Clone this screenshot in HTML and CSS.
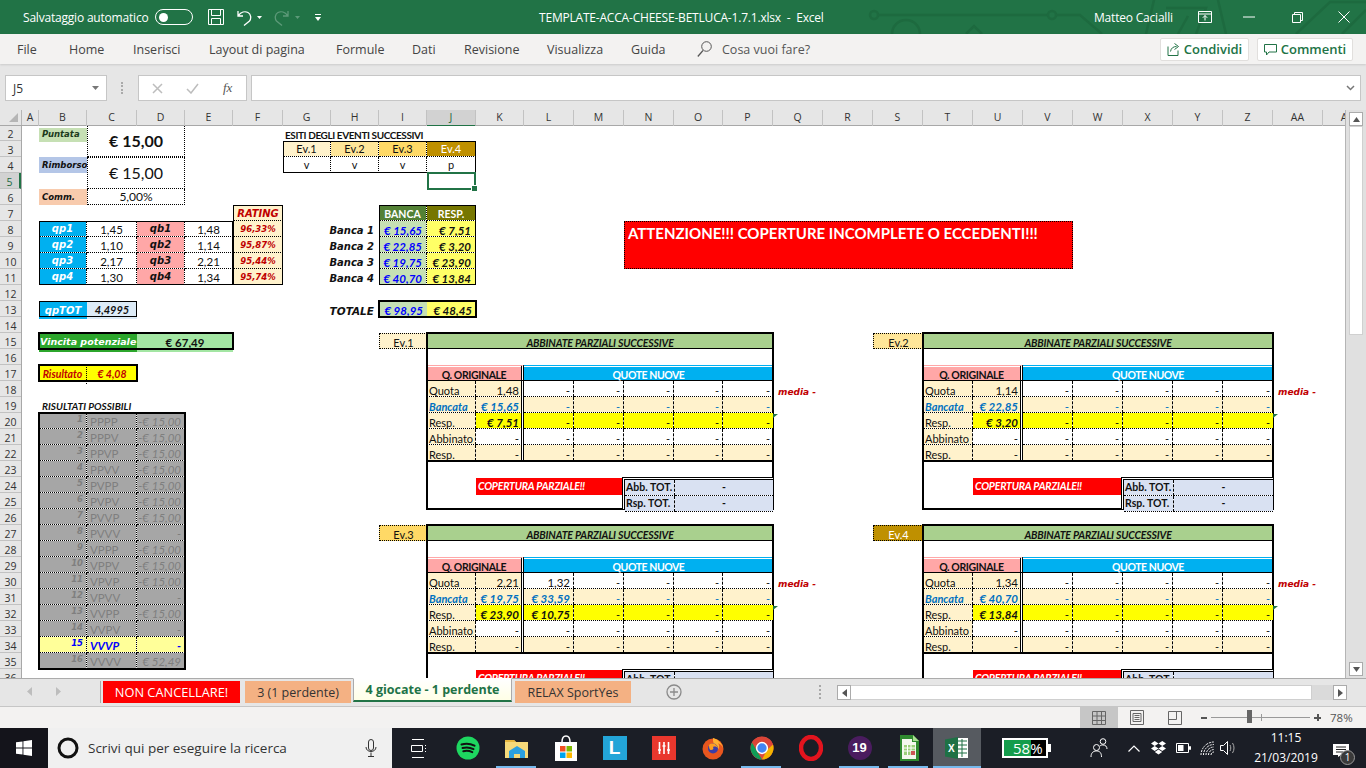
FILE: index.html
```html
<!DOCTYPE html>
<html lang="it">
<head>
<meta charset="utf-8">
<title>TEMPLATE-ACCA-CHEESE-BETLUCA-1.7.1.xlsx - Excel</title>
<link rel="stylesheet" href="styles.css">
</head>
<body>
<div class="app">
  <header class="titlebar">
    <svg class="circuit" width="500" height="34" viewBox="0 0 500 34"><g fill="none" stroke="#1d6a3f" stroke-width="2.5"><circle cx="8" cy="15" r="4"/><path d="M12 15H182"/><circle cx="186" cy="15" r="4"/><path d="M190 15H214L236 34"/><path d="M288 0L280 34M352 0L360 34"/><path d="M300 8H340L330 34M312 34L322 16"/><path d="M26 34A14 14 0 0 1 54 34"/><path d="M100 34L108 26L116 34"/><path d="M430 34L464 2H500"/><path d="M476 34L500 10"/></g></svg>
    <span class="autosave">Salvataggio automatico</span>
    <span class="toggle"><i></i></span>
    <svg class="ti save" width="16" height="16" viewBox="0 0 16 16"><path d="M.5.500h15v15H.5zM3.500.5v6h9v-6M3.500 15.500v-6h9v6" fill="none" stroke="#fff"/></svg>
    <svg class="ti undo" width="15" height="17" viewBox="0 0 15 17"><path d="M1 2v5h5M1.500 6.500C4 3 8 2 11 3.500s3.500 6 1.500 8.500L7 16.500" fill="none" stroke="#fff" stroke-width="1.300"/></svg>
    <svg class="ti drop" width="5" height="3" viewBox="0 0 5 3"><path d="M0 0h5L2.500 3z" fill="#fff"/></svg>
    <svg class="ti redo" width="15" height="17" viewBox="0 0 15 17"><path d="M14 2v5H9M13.500 6.500C11 3 7 2 4 3.500s-3.500 6-1.500 8.500L8 16.500" fill="none" stroke="#5d9a79" stroke-width="1.300"/></svg>
    <svg class="ti drop2" width="5" height="3" viewBox="0 0 5 3"><path d="M0 0h5L2.500 3z" fill="#5d9a79"/></svg>
    <svg class="ti cust" width="6" height="7" viewBox="0 0 6 7"><path d="M0 0h6v1H0zM0 3h6L3 7z" fill="#fff"/></svg>
    <span class="doc">TEMPLATE-ACCA-CHEESE-BETLUCA-1.7.1.xlsx&nbsp; -&nbsp; Excel</span>
    <span class="user">Matteo Cacialli</span>
    <svg class="ti opt" width="14" height="12" viewBox="0 0 14 12"><path d="M.5.500h13v11H.5zM.5 3h13M7 9.500V4.500M4.800 6.800L7 4.500l2.200 2.300" fill="none" stroke="#fff"/></svg>
    <svg class="ti min" width="12" height="2" viewBox="0 0 12 2"><path d="M0 1h12" stroke="#fff"/></svg>
    <svg class="ti res" width="11" height="11" viewBox="0 0 11 11"><path d="M.5 2.500h8v8h-8zM2.500 2.500v-2h8v8h-2" fill="none" stroke="#fff"/></svg>
    <svg class="ti cls" width="12" height="12" viewBox="0 0 12 12"><path d="M.5.500l11 11M11.500.500l-11 11" stroke="#fff"/></svg>
  </header>

  <nav class="menubar">
    <span class="m1">File</span><span class="m2">Home</span><span class="m3">Inserisci</span><span class="m4">Layout di pagina</span><span class="m5">Formule</span><span class="m6">Dati</span><span class="m7">Revisione</span><span class="m8">Visualizza</span><span class="m9">Guida</span>
    <svg class="msearch" width="15" height="16" viewBox="0 0 15 16"><circle cx="9.500" cy="5.500" r="4.800" fill="none" stroke="#555"/><path d="M6 9.500L.8 15.500" stroke="#555" stroke-width="1.200"/></svg>
    <span class="mhelp">Cosa vuoi fare?</span>
    <span class="mbtn share"><svg width="13" height="14" viewBox="0 0 13 14"><path d="M1 4.500v9h10v-5M3.500 9.500C4 6 6.500 4.500 9.500 4.500M7.500 1.500l4 3-4 3" fill="none" stroke="#217346"/></svg>Condividi</span>
    <span class="mbtn comm"><svg width="13" height="13" viewBox="0 0 13 13"><path d="M.5 1.500h12v7.500H5L2.500 12V9H.5z" fill="none" stroke="#217346"/></svg>Commenti</span>
  </nav>

  <section class="fbar">
    <div class="namebox"><span>J5</span><svg width="7" height="4" viewBox="0 0 7 4"><path d="M0 0h7L3.500 4z" fill="#777"/></svg></div>
    <span class="grip"></span>
    <div class="fxbox">
      <svg width="11" height="11" viewBox="0 0 11 11"><path d="M1 1l9 9M10 1l-9 9" stroke="#bdbdbd" stroke-width="1.500"/></svg>
      <svg width="13" height="11" viewBox="0 0 13 11"><path d="M1 6l4 4 7-9" fill="none" stroke="#bdbdbd" stroke-width="1.500"/></svg>
      <em>fx</em>
    </div>
    <div class="finput"><svg width="9" height="6" viewBox="0 0 9 6"><path d="M1 1l3.500 3.500L8 1" fill="none" stroke="#777" stroke-width="1.500"/></svg></div>
  </section>

  <main class="book">
    <div class="pane">
      <div class="colhdr">
        <span class="corner"><svg width="9" height="9" viewBox="0 0 9 9"><path d="M9 0v9H0z" fill="#b5b5b5"/></svg></span>
        <div class="cols">
          <span>A</span><span>B</span><span>C</span><span>D</span><span>E</span><span>F</span><span>G</span><span>H</span><span>I</span><span class="sel">J</span><span>K</span><span>L</span><span>M</span><span>N</span><span>O</span><span>P</span><span>Q</span><span>R</span><span>S</span><span>T</span><span>U</span><span>V</span><span>W</span><span>X</span><span>Y</span><span>Z</span><span>AA</span><span>AB</span>
        </div>
      </div>
      <div class="sheetwrap">
        <div class="rows">
          <span class="first">2</span><span>3</span><span>4</span><span class="sel">5</span><span>6</span><span>7</span><span>8</span><span>9</span><span>10</span><span>11</span><span>12</span><span>13</span><span>14</span><span>15</span><span>16</span><span>17</span><span>18</span><span>19</span><span>20</span><span>21</span><span>22</span><span>23</span><span>24</span><span>25</span><span>26</span><span>27</span><span>28</span><span>29</span><span>30</span><span>31</span><span>32</span><span>33</span><span>34</span><span>35</span><span>36</span>
        </div>
        <div class="sheet">

          <div class="stake">
            <div class="lab lab-g">Puntata</div>
            <div class="val val-big bold">€ 15,00</div>
            <div class="lab lab-b">Rimborso</div>
            <div class="val val-big">€ 15,00</div>
            <div class="lab lab-o">Comm.</div>
            <div class="val val-small">5,00%</div>
          </div>

          <div class="quotes">
            <div class="qp">qp1</div><div class="qn">1,45</div><div class="qb">qb1</div><div class="qn">1,48</div>
            <div class="qp">qp2</div><div class="qn">1,10</div><div class="qb">qb2</div><div class="qn">1,14</div>
            <div class="qp">qp3</div><div class="qn">2,17</div><div class="qb">qb3</div><div class="qn">2,21</div>
            <div class="qp">qp4</div><div class="qn">1,30</div><div class="qb">qb4</div><div class="qn">1,34</div>
          </div>

          <div class="rating">
            <div class="rhead">RATING</div>
            <div>96,33%</div><div>95,87%</div><div>95,44%</div><div>95,74%</div>
          </div>

          <div class="esiti-title">ESITI DEGLI EVENTI SUCCESSIVI</div>
          <div class="esiti">
            <div class="e1">Ev.1</div><div class="e2">Ev.2</div><div class="e3">Ev.3</div><div class="e4">Ev.4</div>
            <div>v</div><div>v</div><div>v</div><div>p</div>
          </div>
          <div class="cursor"></div>

          <div class="banklabels">
            <div>Banca 1</div><div>Banca 2</div><div>Banca 3</div><div>Banca 4</div>
          </div>
          <div class="bank">
            <div class="bh1">BANCA</div><div class="bh2">RESP.</div>
            <div class="bb">€ 15,65</div><div class="br">€ 7,51</div>
            <div class="bb">€ 22,85</div><div class="br">€ 3,20</div>
            <div class="bb">€ 19,75</div><div class="br">€ 23,90</div>
            <div class="bb">€ 40,70</div><div class="br">€ 13,84</div>
          </div>

          <div class="banner">ATTENZIONE!!! COPERTURE INCOMPLETE O ECCEDENTI!!!</div>

          <div class="qptot"><div class="qp">qpTOT</div><div class="qpv">4,4995</div></div>
          <div class="tot-label">TOTALE</div>
          <div class="tot"><div class="bb">€ 98,95</div><div class="br">€ 48,45</div></div>

          <div class="vincita"><div class="vl">Vincita potenziale</div><div class="vv">€ 67,49</div></div>
          <div class="risultato"><div>Risultato</div><div>€ 4,08</div></div>

          <div class="poss-title">RISULTATI POSSIBILI</div>
          <div class="poss">
            <div class="pn">1</div><div class="pc">PPPP</div><div class="pv">-€ 15,00</div>
            <div class="pn">2</div><div class="pc">PPPV</div><div class="pv">-€ 15,00</div>
            <div class="pn">3</div><div class="pc">PPVP</div><div class="pv">-€ 15,00</div>
            <div class="pn">4</div><div class="pc">PPVV</div><div class="pv">-€ 15,00</div>
            <div class="pn">5</div><div class="pc">PVPP</div><div class="pv">-€ 15,00</div>
            <div class="pn">6</div><div class="pc">PVPV</div><div class="pv">-€ 15,00</div>
            <div class="pn">7</div><div class="pc">PVVP</div><div class="pv">-€ 15,00</div>
            <div class="pn">8</div><div class="pc">PVVV</div><div class="pv">-</div>
            <div class="pn">9</div><div class="pc">VPPP</div><div class="pv">-€ 15,00</div>
            <div class="pn">10</div><div class="pc">VPPV</div><div class="pv">-€ 15,00</div>
            <div class="pn">11</div><div class="pc">VPVP</div><div class="pv">-€ 15,00</div>
            <div class="pn">12</div><div class="pc">VPVV</div><div class="pv">-</div>
            <div class="pn">13</div><div class="pc">VVPP</div><div class="pv">-€ 15,00</div>
            <div class="pn">14</div><div class="pc">VVPV</div><div class="pv">-</div>
            <div class="pn hit">15</div><div class="pc hit">VVVP</div><div class="pv hit">-</div>
            <div class="pn">16</div><div class="pc">VVVV</div><div class="pv">€ 52,49</div>
          </div>

          <div class="evlabel l1 e1">Ev.1</div>
          <div class="ev ev-a p1">
            <div class="t">ABBINATE PARZIALI SUCCESSIVE</div><div class="gap"></div>
            <div class="qo">Q. ORIGINALE</div><div class="qnew">QUOTE NUOVE</div>
            <div class="c tx">Quota</div><div class="c k">1,48</div><div class="c f">-</div><div class="c">-</div><div class="c">-</div><div class="c">-</div><div class="c e">-</div>
            <div class="c tx blue bi">Bancata</div><div class="c k blue bi">€ 15,65</div><div class="c f cr blue">-</div><div class="c cr blue">-</div><div class="c cr blue">-</div><div class="c cr blue">-</div><div class="c e cr blue">-</div>
            <div class="c tx">Resp.</div><div class="c k y bi">€ 7,51</div><div class="c f y">-</div><div class="c y">-</div><div class="c y">-</div><div class="c y">-</div><div class="c e y tri">-</div>
            <div class="c tx">Abbinato</div><div class="c k w">-</div><div class="c f">-</div><div class="c">-</div><div class="c">-</div><div class="c">-</div><div class="c e">-</div>
            <div class="c tx">Resp.</div><div class="c k">-</div><div class="c f cr">-</div><div class="c cr">-</div><div class="c cr">-</div><div class="c cr">-</div><div class="c e cr">-</div>
            <div class="blank"></div><div class="red">COPERTURA PARZIALE!!</div>
            <div class="abb"><div>Abb. TOT.</div><div>-</div><div>Rsp. TOT.</div><div>-</div></div>
          </div>
          <div class="media m-r1 q">media -</div>

          <div class="evlabel l2 e2">Ev.2</div>
          <div class="ev ev-b p2">
            <div class="t">ABBINATE PARZIALI SUCCESSIVE</div><div class="gap"></div>
            <div class="qo">Q. ORIGINALE</div><div class="qnew">QUOTE NUOVE</div>
            <div class="c tx">Quota</div><div class="c k">1,14</div><div class="c f">-</div><div class="c">-</div><div class="c">-</div><div class="c">-</div><div class="c e">-</div>
            <div class="c tx blue bi">Bancata</div><div class="c k blue bi">€ 22,85</div><div class="c f cr blue">-</div><div class="c cr blue">-</div><div class="c cr blue">-</div><div class="c cr blue">-</div><div class="c e cr blue">-</div>
            <div class="c tx">Resp.</div><div class="c k y bi">€ 3,20</div><div class="c f y">-</div><div class="c y">-</div><div class="c y">-</div><div class="c y">-</div><div class="c e y tri">-</div>
            <div class="c tx">Abbinato</div><div class="c k w">-</div><div class="c f">-</div><div class="c">-</div><div class="c">-</div><div class="c">-</div><div class="c e">-</div>
            <div class="c tx">Resp.</div><div class="c k">-</div><div class="c f cr">-</div><div class="c cr">-</div><div class="c cr">-</div><div class="c cr">-</div><div class="c e cr">-</div>
            <div class="blank"></div><div class="red">COPERTURA PARZIALE!!</div>
            <div class="abb"><div>Abb. TOT.</div><div>-</div><div>Rsp. TOT.</div><div>-</div></div>
          </div>
          <div class="media m-r1 aa">media -</div>

          <div class="evlabel l3 e3">Ev.3</div>
          <div class="ev ev-a p3">
            <div class="t">ABBINATE PARZIALI SUCCESSIVE</div><div class="gap"></div>
            <div class="qo">Q. ORIGINALE</div><div class="qnew">QUOTE NUOVE</div>
            <div class="c tx">Quota</div><div class="c k">2,21</div><div class="c f">1,32</div><div class="c">-</div><div class="c">-</div><div class="c">-</div><div class="c e">-</div>
            <div class="c tx blue bi">Bancata</div><div class="c k blue bi">€ 19,75</div><div class="c f cr blue bi">€ 33,59</div><div class="c cr blue">-</div><div class="c cr blue">-</div><div class="c cr blue">-</div><div class="c e cr blue">-</div>
            <div class="c tx">Resp.</div><div class="c k y bi">€ 23,90</div><div class="c f y bi">€ 10,75</div><div class="c y">-</div><div class="c y">-</div><div class="c y">-</div><div class="c e y tri">-</div>
            <div class="c tx">Abbinato</div><div class="c k w">-</div><div class="c f">-</div><div class="c">-</div><div class="c">-</div><div class="c">-</div><div class="c e">-</div>
            <div class="c tx">Resp.</div><div class="c k">-</div><div class="c f cr">-</div><div class="c cr">-</div><div class="c cr">-</div><div class="c cr">-</div><div class="c e cr">-</div>
            <div class="blank"></div><div class="red">COPERTURA PARZIALE!!</div>
            <div class="abb"><div>Abb. TOT.</div><div>-</div><div>Rsp. TOT.</div><div>-</div></div>
          </div>
          <div class="media m-r2 q">media -</div>

          <div class="evlabel l4 e4">Ev.4</div>
          <div class="ev ev-b p4">
            <div class="t">ABBINATE PARZIALI SUCCESSIVE</div><div class="gap"></div>
            <div class="qo">Q. ORIGINALE</div><div class="qnew">QUOTE NUOVE</div>
            <div class="c tx">Quota</div><div class="c k">1,34</div><div class="c f">-</div><div class="c">-</div><div class="c">-</div><div class="c">-</div><div class="c e">-</div>
            <div class="c tx blue bi">Bancata</div><div class="c k blue bi">€ 40,70</div><div class="c f cr blue">-</div><div class="c cr blue">-</div><div class="c cr blue">-</div><div class="c cr blue">-</div><div class="c e cr blue">-</div>
            <div class="c tx">Resp.</div><div class="c k y bi">€ 13,84</div><div class="c f y">-</div><div class="c y">-</div><div class="c y">-</div><div class="c y">-</div><div class="c e y tri">-</div>
            <div class="c tx">Abbinato</div><div class="c k w">-</div><div class="c f">-</div><div class="c">-</div><div class="c">-</div><div class="c">-</div><div class="c e">-</div>
            <div class="c tx">Resp.</div><div class="c k">-</div><div class="c f cr">-</div><div class="c cr">-</div><div class="c cr">-</div><div class="c cr">-</div><div class="c e cr">-</div>
            <div class="blank"></div><div class="red">COPERTURA PARZIALE!!</div>
            <div class="abb"><div>Abb. TOT.</div><div>-</div><div>Rsp. TOT.</div><div>-</div></div>
          </div>
          <div class="media m-r2 aa">media -</div>

        </div>
      </div>
    </div>
    <aside class="vscroll">
      <span class="sbtn"><svg width="7" height="5" viewBox="0 0 7 5"><path d="M3.500 0L7 5H0z" fill="#555"/></svg></span>
      <span class="vthumb"></span>
      <span class="sbtn"><svg width="7" height="5" viewBox="0 0 7 5"><path d="M3.500 5L7 0H0z" fill="#555"/></svg></span>
    </aside>
  </main>

  <div class="tabs">
    <svg class="nav1" width="5" height="9" viewBox="0 0 5 9"><path d="M5 0v9L0 4.500z" fill="#bdbdbd"/></svg>
    <svg class="nav2" width="5" height="9" viewBox="0 0 5 9"><path d="M0 0v9l5-4.500z" fill="#bdbdbd"/></svg>
    <span class="tab t-red">NON CANCELLARE!</span>
    <span class="tab t-or">3 (1 perdente)</span>
    <span class="tab t-act">4 giocate - 1 perdente</span>
    <span class="tab t-or2">RELAX SportYes</span>
    <svg class="plus" width="16" height="16" viewBox="0 0 16 16"><circle cx="8" cy="8" r="7" fill="none" stroke="#8a8a8a" stroke-width="1.300"/><path d="M8 4v8M4 8h8" stroke="#8a8a8a" stroke-width="1.300"/></svg>
    <span class="hgrip"></span>
    <div class="hscroll">
      <span class="hbtn"><svg width="5" height="8" viewBox="0 0 5 8"><path d="M5 0v8L0 4z" fill="#555"/></svg></span>
      <span class="hthumb"></span>
      <span class="hbtn hright"><svg width="5" height="8" viewBox="0 0 5 8"><path d="M0 0v8l5-4z" fill="#555"/></svg></span>
    </div>
  </div>

  <footer class="status">
    <span class="vbtn on"><svg width="14" height="14" viewBox="0 0 14 14"><path d="M.5.500h13v13H.5zM.5 5h13M.5 9.500h13M5 .5v13M9.500.5v13" fill="none" stroke="#666"/></svg></span>
    <span class="vbtn"><svg width="14" height="15" viewBox="0 0 14 15"><path d="M.5.500h13v14H.5zM3 3.500h8v8H3zM4.500 5.500h5M4.500 7.500h5M4.500 9.500h5" fill="none" stroke="#666"/></svg></span>
    <span class="vbtn"><svg width="14" height="14" viewBox="0 0 14 14"><path d="M.5.500h13v13H.5zM.5 8.500h8v-8" fill="none" stroke="#666"/></svg></span>
    <div class="zoom">
      <i class="zm"></i>
      <span class="ztrack"><b></b><u></u></span>
      <i class="zm zp"></i>
      <span class="zpct">78%</span>
    </div>
  </footer>

  <div class="taskbar">
    <span class="start"><svg width="16" height="16" viewBox="0 0 16 16"><path d="M0 2.300L6.500 1.400v6.200H0zM7.400 1.300L16 0v7.600H7.400zM0 8.400h6.500v6.200L0 13.700zM7.400 8.400H16V16l-8.600-1.300z" fill="#fff"/></svg></span>
    <div class="search">
      <svg width="22" height="22" viewBox="0 0 22 22"><circle cx="11" cy="11" r="9" fill="none" stroke="#111" stroke-width="3"/></svg>
      <span>Scrivi qui per eseguire la ricerca</span>
      <svg class="mic" width="12" height="18" viewBox="0 0 12 18"><rect x="3.500" y=".5" width="5" height="11" rx="2.500" fill="none" stroke="#333"/><path d="M1 8c0 6 10 6 10 0M6 13.500v3.500M3 17.500h6" fill="none" stroke="#333"/></svg>
    </div>
    <span class="task"><svg width="16" height="19" viewBox="0 0 16 19"><path d="M1 .5h12M1 18.500h12M.5 6.500h11v6H.5zM14.500 6v1M14.500 9v1M14.500 12v1" fill="none" stroke="#fff"/></svg></span>
    <span class="task"><svg width="24" height="24" viewBox="0 0 24 24"><circle cx="12" cy="12" r="11.500" fill="#1ed760"/><path d="M5.500 8.500c4-1.200 9-.9 13 1.200M6.500 12c3.500-1 7.500-.7 11 1.100M7.300 15.300c3-.8 6-.5 9 .9" fill="none" stroke="#111" stroke-width="2" stroke-linecap="round"/></svg></span>
    <span class="task on"><svg width="24" height="22" viewBox="0 0 24 22"><path d="M0 3h9l2 2h12v16H0z" fill="#f5d97a"/><path d="M0 3h9l2 2H0z" fill="#e6b63f"/><path d="M4 14l8-5 8 5v7H15v-4H9v4H4z" fill="#2a9fdf"/></svg></span>
    <span class="task"><svg width="24" height="27" viewBox="0 0 24 27"><path d="M1 7h22v19H1z" fill="#fff"/><path d="M8 7c0-8 8-8 8 0" fill="none" stroke="#fff" stroke-width="1.500"/><path d="M6 11h5.500v5.500H6z" fill="#f25022"/><path d="M12.500 11H18v5.500h-5.500z" fill="#7fba00"/><path d="M6 17.500h5.500V23H6z" fill="#00a4ef"/><path d="M12.500 17.500H18V23h-5.500z" fill="#ffb900"/></svg></span>
    <span class="task"><span class="lic">L</span></span>
    <span class="task"><svg width="24" height="24" viewBox="0 0 24 24"><rect width="24" height="24" fill="#e9372d"/><path d="M7.500 6v12M12 6v12M16.500 6v12" stroke="#fff" stroke-width="1.600"/><path d="M6 14h3M10.500 10h3M15 14h3" stroke="#fff" stroke-width="1.500"/></svg></span>
    <span class="task"><svg width="24" height="24" viewBox="0 0 24 24"><circle cx="12" cy="13" r="10.500" fill="#e8561f"/><path d="M12 2c4 1 10 5 10 11 0-3-3-5-5-6 2 3 1 6-1 7-3 1-6 0-5-3l3-1c-2-1-1-3-2-5 0-1 0-2 0-3z" fill="#ffb02e"/><circle cx="12" cy="12.500" r="5" fill="#3a3da8"/><path d="M8 9c3-3 8-1 9 3-1-1-3-2-5-1 1 2 0 3-2 3-1 0-2-1-2-5z" fill="#ff9e1f"/></svg></span>
    <span class="task on"><svg width="24" height="24" viewBox="0 0 24 24"><circle cx="12" cy="12" r="11.500" fill="#dd4b3e"/><path d="M12 12L2 7A11.500 11.500 0 0 1 23 8.500H12z" fill="#db4437"/><path d="M12 23.500A11.500 11.500 0 0 1 2 6.500l6.200 10.800z" fill="#0f9d58"/><path d="M12 23.500l5-9.500 6-5.500A11.500 11.500 0 0 1 12 23.500z" fill="#f4b400"/><circle cx="12" cy="12" r="5.400" fill="#4285f4" stroke="#fff" stroke-width="1.500"/></svg></span>
    <span class="task"><svg width="24" height="26" viewBox="0 0 24 26"><ellipse cx="12" cy="13" rx="10" ry="11" fill="none" stroke="#e3141e" stroke-width="4.500"/></svg></span>
    <span class="task on"><span class="n19">19</span></span>
    <span class="task on"><svg width="20" height="26" viewBox="0 0 20 26"><path d="M1 0h13l6 6v20H1z" fill="#2f8a2f"/><path d="M14 0l6 6h-6z" fill="#a7df8f"/><path d="M3 4h10v3h4v17H3z" fill="#f4f7ee"/><path d="M5 10h11v10H5z" fill="#9bd07a"/><path d="M5 13h11M5 16h11M8.500 10v10M12 10v10" stroke="#fff"/><path d="M12 20v-4h4v4z" fill="#c55"/></svg></span>
    <span class="task active"><svg width="24" height="22" viewBox="0 0 24 22"><path d="M11 1h12v20H11z" fill="#fff"/><path d="M12 4h10M12 8h10M12 12h10M12 16h10M17 2v18" stroke="#1e7145"/><path d="M0 2.500L13 0v22L0 19.500z" fill="#1e7145"/><text class="xl" x="3" y="15">X</text></svg></span>
    <div class="battery"><div class="level">58%</div></div>
    <svg class="peop" width="18" height="20" viewBox="0 0 18 20"><circle cx="6.500" cy="9.500" r="3" fill="none" stroke="#fff"/><circle cx="13" cy="3.500" r="2.800" fill="none" stroke="#fff"/><path d="M1 19c0-4 2-6 5.500-6s5 2 5 6M10 8c1-1 2-1 3-1 2.500 0 4 1.500 4 4" fill="none" stroke="#fff"/></svg>
    <svg class="sys s1" width="12" height="7" viewBox="0 0 12 7"><path d="M.5 6.500L6 1l5.500 5.500" fill="none" stroke="#fff" stroke-width="1.200"/></svg>
    <svg class="sys s2" width="15" height="14" viewBox="0 0 15 14"><path d="M3.700 0l3.800 2.500L3.700 5 0 2.500zM11.300 0L15 2.500 11.300 5 7.500 2.500zM3.700 5l3.800 2.500-3.800 2.500L0 7.500zM11.300 5L15 7.500 11.300 10 7.500 7.500zM3.800 11l3.700-2.400 3.700 2.400-3.700 2.500z" fill="#fff"/></svg>
    <svg class="sys s3" width="15" height="10" viewBox="0 0 15 10"><path d="M.5.500h12v9H.5zM13.500 3.500h1v3h-1z" fill="none" stroke="#fff"/><path d="M2 2h5.500v6H2z" fill="#fff"/></svg>
    <svg class="sys s4" width="15" height="15" viewBox="0 0 15 15"><path d="M1 14A13 13 0 0 1 14 1M3.500 14A10.500 10.500 0 0 1 14 3.500M6 14a8 8 0 0 1 8-8M8.500 14A5.500 5.500 0 0 1 14 8.500M11 14a3 3 0 0 1 3-3" fill="none" stroke="#fff" stroke-width="1" stroke-dasharray="2 1"/></svg>
    <svg class="sys s5" width="16" height="16" viewBox="0 0 16 16"><path d="M.5 5.500h3l4-4v13l-4-4h-3z" fill="none" stroke="#fff"/><path d="M10 5c1 1.500 1 4.500 0 6M12.500 3c2 3 2 7 0 10" fill="none" stroke="#aaa"/></svg>
    <div class="clock"><div>11:15</div><div>21/03/2019</div></div>
    <span class="notif"><svg width="16" height="13" viewBox="0 0 16 13"><path d="M0 0h16v11h-8l-3 2v-2H0z" fill="#fff"/><path d="M3 3h10M3 5.500h10M3 8h7" stroke="#222"/></svg><b>1</b></span>
  </div>
</div>
</body>
</html>
```
FILE: styles.css
```css
* { box-sizing: border-box; }
html, body { margin: 0; padding: 0; }
body { width: 1366px; height: 768px; overflow: hidden; font-family: "Open Sans", "Liberation Sans", sans-serif; background: #fff; }
.app { width: 1366px; height: 768px; display: flex; flex-direction: column; }

/* title bar */
.titlebar { height: 34px; background: #217346; color: #fff; display: flex; align-items: center; padding-left: 23px; font-size: 12px; letter-spacing: -.2px; position: relative; flex: none; }
.circuit { position: absolute; left: 866px; top: 0; }
.titlebar > span, .titlebar > svg:not(.circuit) { position: relative; }
.autosave { width: 125px; white-space: nowrap; }
.toggle { width: 38px; height: 16px; border: 1px solid #fff; border-radius: 8px; margin-left: 7px; display: flex; align-items: center; padding-left: 3px; }
.toggle i { width: 9px; height: 9px; background: #fff; border-radius: 50%; }
.ti { flex: none; }
.save { margin-left: 15px; }
.undo { margin-left: 13px; }
.drop { margin-left: 5px; }
.redo { margin-left: 12px; }
.drop2 { margin-left: 6px; }
.cust { margin-left: 15px; }
.doc { margin-left: 218px; white-space: nowrap; width: 259px; }
.user { margin-left: 296px; white-space: nowrap; width: 79px; }
.opt { margin-left: 25px; }
.min { margin-left: 31px; }
.res { margin-left: 37px; }
.cls { margin-left: 35px; }

/* menu */
.menubar { height: 30px; background: #f3f2f1; flex: none; display: flex; align-items: center; font-size: 12.500px; color: #444; box-shadow: 0 1px 2px rgba(0,0,0,.12); position: relative; padding-left: 17px; white-space: nowrap; }
.menubar span { flex: none; }
.m1 { width: 52px; } .m2 { width: 64px; } .m3 { width: 76px; } .m4 { width: 127px; } .m5 { width: 76px; } .m6 { width: 52px; } .m7 { width: 83px; } .m8 { width: 84px; } .m9 { width: 66px; }
.msearch { flex: none; }
.mhelp { margin-left: 10px; width: 438px; color: #555; }
.mbtn { background: #fff; border: 1px solid #e1dfdd; border-radius: 2px; height: 23px; display: flex; align-items: center; justify-content: center; gap: 4px; color: #217346; font-size: 13px; font-weight: 600; }
.share { width: 89px; }
.comm { width: 96px; margin-left: 8px; }

/* formula bar */
.fbar { height: 46px; background: #e6e6e6; flex: none; display: flex; align-items: flex-start; padding: 11px 5px 0; }
.namebox { width: 102px; height: 26px; background: #fff; border: 1px solid #c6c6c6; display: flex; align-items: center; justify-content: space-between; padding: 0 7px; font-size: 12px; color: #333; }
.grip { width: 3px; height: 12px; margin: 7px 14px 0; border-left: 2px dotted #aaa; }
.fxbox { width: 109px; height: 26px; background: #fff; border: 1px solid #c6c6c6; margin-left: 0; display: flex; align-items: center; padding-left: 13px; gap: 23px; }
.fxbox em { font-family: "Liberation Serif", serif; font-size: 13px; color: #555; margin-left: 1px; }
.finput { flex: 1; height: 26px; background: #fff; border: 1px solid #c6c6c6; margin-left: 4px; display: flex; align-items: center; justify-content: flex-end; padding-right: 5px; }

/* workbook */
.book { height: 568px; flex: none; display: flex; background: #e6e6e6; }
.pane { width: 1345px; flex: none; display: flex; flex-direction: column; overflow: hidden; }
.colhdr { height: 16px; display: flex; flex: none; border-bottom: 1px solid #a8a8a8; }
.corner { width: 22px; flex: none; border-right: 1px solid #b5b5b5; display: flex; align-items: flex-end; justify-content: flex-end; padding: 0 3px 3px 0; }
.cols, .sheet { display: grid; grid-template-columns: 17px 48px 50px 48px 48px 50px 48px 48px 48px 49px 48px 50px 50px 50px 49px 50px 50px 50px 50px 50px 50px 50px 50px 50px 50px 50px 50px 50px; }
.cols span { font-size: 10.500px; color: #333; text-align: center; line-height: 15px; border-right: 1px solid #c2c2c2; }
.cols .sel { background: #d2d2d2; border-bottom: 2px solid #217346; color: #1d6a3f; }
.sheetwrap { height: 552px; flex: none; display: flex; }
.rows { width: 22px; flex: none; display: flex; flex-direction: column; overflow: hidden; border-right: 1px solid #a8a8a8; }
.rows span { height: 16px; flex: none; font-size: 10.500px; color: #333; text-align: center; line-height: 18px; border-bottom: 1px solid #c2c2c2; }
.rows .first { height: 15px; line-height: 17px; }
.rows .sel { background: #d2d2d2; border-right: 2px solid #217346; color: #1d6a3f; }

.sheet { flex: 1; min-width: 0; height: 552px; overflow: hidden; background: #fff; grid-template-rows: 15px; grid-auto-rows: 16px; font-family: Lato, "Liberation Sans", sans-serif; font-size: 11px; color: #111; }
.sheet div { min-width: 0; }

/* stake block */
.stake { grid-column: 2 / 5; grid-row: 1 / 6; display: grid; grid-template-columns: 48px 98px; grid-template-rows: 15px 16px 16px 16px 16px; }
.lab { font: italic bold 8.500px "DejaVu Sans", sans-serif; padding-left: 3px; line-height: 16px; white-space: nowrap; overflow: hidden; color: #111; }
.lab-g { background: #c6e0b4; grid-row: 1; grid-column: 1; margin-top: 2px; line-height: 13px; height: 14px; color: #1c3a1c; }
.lab-b { background: #b4c6e7; grid-row: 3; grid-column: 1; }
.lab-o { background: #f8cbad; grid-row: 5; grid-column: 1; }
.val { grid-column: 2; display: flex; align-items: center; justify-content: center; border: 1px dotted #000; border-top: 0; }
.val-big { font-size: 16px; grid-row: span 2; padding-bottom: 2px; }
.stake .val:nth-child(2) { grid-row: 1 / 3; }
.stake .val:nth-child(4) { grid-row: 3 / 5; border-top: 1px dotted #000; border-bottom: 1px dotted #000; }
.val-small { grid-row: 5; font-size: 12px; }
.bold { font-weight: 700; }

/* quotes */
.quotes { grid-column: 2 / 6; grid-row: 7 / 11; display: grid; grid-template-columns: 48px 50px 48px 48px; grid-auto-rows: 16px; outline: 1px solid #000; outline-offset: -1px; }
.qp, .qb, .qn { display: flex; align-items: center; justify-content: center; border-bottom: 1px dotted #000; border-right: 1px dotted #000; background-clip: padding-box; }
.qp { background-color: #00b0f0; color: #fff; font: italic bold 10px "DejaVu Sans", sans-serif; }
.qb { background-color: #ffa7a7; color: #111; font: italic bold 10px "DejaVu Sans", sans-serif; }
.qn { font-size: 11.500px; padding-top: 2px; }

.rating { grid-column: 6; grid-row: 6 / 11; display: grid; grid-auto-rows: 16px; background: #fff2cc; outline: 1px solid #000; outline-offset: -1px; font: italic bold 8.500px "DejaVu Sans", sans-serif; color: #c00000; text-align: center; overflow: hidden; }
.rating div { line-height: 17px; border-bottom: 1px dotted #000; background: #fff2cc; background-clip: padding-box; }
.rating .rhead { background: transparent; font-size: 10px; }

/* esiti */
.esiti-title { grid-column: 7 / 11; grid-row: 1; font-weight: 700; font-size: 10px; letter-spacing: -.4px; line-height: 18px; white-space: nowrap; padding-left: 2px; }
.esiti { grid-column: 7 / 11; grid-row: 2 / 4; display: grid; grid-template-columns: 48px 48px 48px 49px; grid-auto-rows: 16px; outline: 1px solid #000; outline-offset: -1px; text-align: center; line-height: 15px; }
.esiti div { border-bottom: 1px dotted #000; border-right: 1px dotted #000; background-clip: padding-box; }
.e1 { background-color: #fff2cc; } .e2 { background-color: #ffe699; } .e3 { background-color: #ffd966; } .e4 { background-color: #bf9000; color: #fff; }
.cursor { grid-column: 10; grid-row: 4; border: 2px solid #217346; margin: -1px 0 -1px 0; position: relative; }
.cursor::after { content: ""; position: absolute; right: -3px; bottom: -3px; width: 5px; height: 5px; background: #217346; border: 1px solid #fff; border-width: 1px 0 0 1px; }

/* bank */
.banklabels { grid-column: 7 / 9; grid-row: 7 / 11; display: grid; grid-auto-rows: 16px; text-align: right; padding-right: 5px; font: italic bold 10px "DejaVu Sans", sans-serif; line-height: 19px; }
.bank { grid-column: 9 / 11; grid-row: 6 / 11; display: grid; grid-template-columns: 48px 49px; grid-auto-rows: 16px; outline: 1px solid #000; outline-offset: -1px; }
.bank div, .tot div { display: flex; align-items: center; justify-content: flex-end; padding: 3px 4px 0 0; font-weight: 700; font-style: italic; font-size: 11.500px; }
.bank div { border-bottom: 1px dotted #000; border-right: 1px dotted #000; background-clip: padding-box; }
.bank .bh1, .bank .bh2 { justify-content: center; color: #fff; font-style: normal; padding: 2px 0 0; font-size: 10.500px; }
.bh1 { background-color: #538135; } .bh2 { background-color: #767600; }
.bb { background-color: #c6e0b4; color: #0000ff; }
.br { background-color: #ffff66; }

.banner { grid-column: 14 / 23; grid-row: 7 / 10; background: #ff0000; color: #fff; font-weight: 700; font-size: 15px; line-height: 22px; padding-left: 3px; border: 1px dotted #000; white-space: nowrap; }

.qptot { grid-column: 2 / 4; grid-row: 12; display: grid; grid-template-columns: 48px 50px; outline: 1px solid #000; outline-offset: -1px; }
.qptot .qp { border: 0; }
.qpv { background: #ddebf7; font-weight: 700; font-style: italic; text-align: center; line-height: 18px; font-size: 11px; }
.tot-label { grid-column: 7 / 9; grid-row: 12; text-align: right; padding-right: 5px; font: italic bold 10.500px "DejaVu Sans", sans-serif; line-height: 20px; }
.tot { grid-column: 9 / 11; grid-row: 12; display: grid; grid-template-columns: 48px 49px; outline: 2px solid #000; outline-offset: -1px; }

.vincita { grid-column: 2 / 6; grid-row: 14; display: grid; grid-template-columns: 98px 96px; outline: 2px solid #000; outline-offset: -1px; }
.vl { background: #2ca62c; color: #fff; font: italic bold 9.500px "DejaVu Sans", sans-serif; line-height: 17px; white-space: nowrap; overflow: hidden; padding-left: 1px; }
.vv { background: #a3e6a3; text-align: center; font-weight: 700; line-height: 19px; font-size: 11.500px; }
.risultato { grid-column: 2 / 4; grid-row: 16; display: grid; grid-template-columns: 48px 50px; outline: 2px solid #000; outline-offset: -1px; background: #ffff00; color: #c00000; font-style: italic; font-weight: 700; line-height: 19px; text-align: center; font-size: 10.500px; }
.risultato div:first-child { border-right: 1px dotted #000; }

.poss-title { grid-column: 2 / 5; grid-row: 18; font-weight: 700; font-style: italic; font-size: 10px; line-height: 18px; padding-left: 3px; white-space: nowrap; }
.poss { grid-column: 2 / 5; grid-row: 19 / 35; display: grid; grid-template-columns: 48px 50px 48px; grid-auto-rows: 16px; outline: 2px solid #000; outline-offset: -1px; background: #fff; color: #7f7f7f; font-size: 11.500px; }
.poss div { background-color: #a6a6a6; background-clip: padding-box; border-bottom: 1px dotted #000; border-right: 1px dotted #000; line-height: 17px; }
.pn { text-align: right; padding-right: 3px; font: italic bold 8.500px/13px "DejaVu Sans", sans-serif; }
.poss .pn { line-height: 13px; }
.pc { padding-left: 3px; }
.pv { text-align: right; padding-right: 3px; font-style: italic; }
.poss .hit { background-color: #ffff99; color: #0000ff; font-weight: 700; font-style: italic; }

/* event tables */
.evlabel { text-align: center; line-height: 17px; border: 1px dotted #000; border-right: 0; }
.l1 { grid-column: 9; grid-row: 14; } .l2 { grid-column: 19; grid-row: 14; } .l3 { grid-column: 9; grid-row: 26; } .l4 { grid-column: 19; grid-row: 26; }
.ev { display: grid; grid-auto-rows: 16px; outline: 2px solid #000; outline-offset: -1px; }
.ev-a { grid-template-columns: 49px 48px 50px 50px 50px 49px 50px; }
.ev-b { grid-template-columns: repeat(7, 50px); }
.p1 { grid-column: 10 / 17; grid-row: 14 / 25; }
.p2 { grid-column: 20 / 27; grid-row: 14 / 25; }
.p3 { grid-column: 10 / 17; grid-row: 26 / 37; }
.p4 { grid-column: 20 / 27; grid-row: 26 / 37; }
.t { grid-column: 1 / -1; background: #a9d08e; text-align: center; font-weight: 700; font-style: italic; font-size: 10.500px; letter-spacing: -.18px; line-height: 20px; border-bottom: 1px solid #000; }
.gap { grid-column: 1 / -1; }
.qo { grid-column: span 2; background-color: #ffa7a7; text-align: center; font-weight: 700; font-size: 10.500px; letter-spacing: -.4px; line-height: 16px; border-top: 1px solid #ffa7a7; padding-top: 1px; border-right: 3px double #000; border-bottom: 1px solid #000; background-clip: content-box; }
.qnew { grid-column: span 5; background-color: #00b0f0; color: #fff; text-align: center; font-weight: 700; font-size: 10.500px; letter-spacing: -.45px; line-height: 16px; border-top: 1px solid #00b0f0; padding-top: 1px; border-bottom: 1px solid #000; background-clip: content-box; }
.c { text-align: right; padding-right: 3px; line-height: 20px; border-bottom: 1px dotted #000; border-right: 1px dashed #000; background-clip: padding-box; white-space: nowrap; }
.c.tx { text-align: left; padding: 0 0 0 2px; background-color: #fff2cc; }
.c.k { background-color: #fff2cc; border-right: 3px double #000; padding-right: 2px; font-size: 11.500px; }
.c.f { padding-right: 3px; font-size: 11.500px; }
.c.e { border-right: 0; }
.c.cr { background-color: #fff2cc; }
.c.y, .c.k.y { background-color: #ffff00; }
.c.k.w { background-color: #fff; }
.blue { color: #0070c0; }
.bi { font-weight: 700; font-style: italic; }
.tri { position: relative; }
.tri::after { content: ""; position: absolute; right: -5px; top: 1px; border-style: solid; border-width: 4px 5px 0 0; border-color: #217346 transparent transparent transparent; }
.ev > .blank { grid-column: 1 / -1; grid-row: 9 / 12; border-top: 2px solid #000; margin-top: -1px; }
.ev > .red { grid-column: 2 / 5; grid-row: 10; height: 17px; background: #ff0000; color: #fff; font-weight: 700; font-style: italic; font-size: 10.500px; letter-spacing: -.2px; line-height: 17px; padding-left: 2px; white-space: nowrap; position: relative; margin-top: 1px; }
.abb { grid-column: 5 / 8; grid-row: 10 / 12; display: grid; grid-template-columns: 50px 1fr; grid-auto-rows: 16px; background: #fff; border: 3px double #000; border-width: 3px 0 0 3px; margin-left: -2px; position: relative; }
.abb div { background-color: #d9e1f2; background-clip: padding-box; border-bottom: 1px dotted #000; line-height: 15px; text-align: center; font-weight: 700; font-size: 10.500px; white-space: nowrap; }
.abb div:nth-child(odd) { border-right: 1px dashed #000; text-align: left; padding-left: 1px; }
.media { font: italic bold 9px/22px "DejaVu Sans", sans-serif; color: #c00000; padding-left: 5px; white-space: nowrap; }
.m-r1 { grid-row: 17; } .m-r2 { grid-row: 29; }
.q { grid-column: 17 / 19; } .aa { grid-column: 27 / 29; }

/* vertical scroll */
.vscroll { width: 21px; flex: none; background: #e0e0e0; border-left: 1px solid #b5b5b5; display: flex; flex-direction: column; align-items: center; padding: 2px 0; }
.sbtn { width: 14px; height: 14px; background: #fff; border: 1px solid #ababab; display: flex; align-items: center; justify-content: center; flex: none; }
.vthumb { width: 14px; height: 209px; background: #fff; border: 1px solid #d0d0d0; margin-bottom: auto; }

/* tabs */
.tabs { height: 29px; flex: none; background: #e6e6e6; border-top: 1px solid #ababab; border-bottom: 1px solid #c6c6c6; display: flex; align-items: flex-start; position: relative; font-size: 12.500px; color: #333; }
.nav1 { margin: 8px 0 0 27px; flex: none; } .nav2 { margin: 8px 0 0 24px; flex: none; }
.tab { height: 22px; flex: none; display: flex; align-items: center; justify-content: center; margin-top: 2px; white-space: nowrap; }
.t-red { width: 137px; background: #ff0000; color: #fff; margin-left: 42px; font-size: 12.800px; box-shadow: -2px 0 0 #e6e6e6, -3px 0 0 #ababab; }
.t-or { width: 106px; background: #f4b183; margin-left: 5px; }
.t-act { width: 159px; height: 24px; margin: -1px 0 0 2px; background: linear-gradient(#fff, #ffffe6); color: #217346; font-weight: 700; border: 1px solid #ababab; border-top-color: #fff; border-bottom: 2px solid #217346; }
.t-or2 { width: 116px; background: #f4b183; margin-left: 3px; }
.plus { margin: 5px 0 0 35px; flex: none; }
.hgrip { width: 3px; height: 14px; margin: 6px 0 0 137px; border-left: 2px dotted #a8a8a8; flex: none; }
.hscroll { display: flex; margin: 6px 0 0 15px; height: 15px; width: 510px; background: #dadada; }
.hbtn { width: 14px; height: 15px; background: #fff; border: 1px solid #ababab; display: flex; align-items: center; justify-content: center; flex: none; }
.hthumb { width: 461px; background: #fff; border: 1px solid #cfcfcf; border-left: 0; }
.hright { margin-left: auto; }

/* status */
.status { height: 21px; flex: none; background: #f3f2f1; display: flex; align-items: center; justify-content: flex-start; padding-left: 1080px; }
.vbtn { width: 38px; height: 21px; display: flex; align-items: center; justify-content: center; flex: none; }
.vbtn.on { background: #c6c6c6; }
.zoom { display: flex; align-items: center; margin-left: 7px; }
.zm { width: 6px; height: 2px; background: #555; position: relative; display: block; }
.zp { width: 7px; }
.zp::after { content: ""; position: absolute; left: 2.500px; top: -2.500px; width: 2px; height: 7px; background: #555; }
.ztrack { width: 99px; height: 1px; background: #999; margin: 0 4px; position: relative; }
.ztrack b { position: absolute; left: 36px; top: -7px; width: 5px; height: 13px; background: #666; }
.ztrack u { position: absolute; left: 50px; top: -3px; width: 1px; height: 7px; background: #999; }
.zpct { font-size: 11.500px; color: #555; margin-left: 9px; }

/* taskbar */
.taskbar { height: 40px; flex: none; background: #1b1e26; display: flex; align-items: center; color: #fff; position: relative; }
.start { width: 48px; height: 40px; background: #14141b; display: flex; align-items: center; justify-content: center; flex: none; }
.search { width: 344px; height: 40px; background: #f0f0f0; flex: none; display: flex; align-items: center; padding-left: 9px; font-size: 13.500px; color: #333; margin-right: 2px; }
.search span { margin-left: 9px; white-space: nowrap; }
.mic { margin-left: auto; margin-right: 15px; }
.task { width: 49px; height: 40px; flex: none; display: flex; align-items: center; justify-content: center; position: relative; }
.task.on::after { content: ""; position: absolute; left: 4px; right: 5px; bottom: 0; height: 2px; background: #76b9ed; }
.task.active { background: #565a60; width: 48px; }
.task.active::after { content: ""; position: absolute; left: 0; right: 0; bottom: 0; height: 2px; background: #76b9ed; }
.xl { font: bold 10px "Liberation Sans", sans-serif; fill: #fff; }
.lic { width: 24px; height: 24px; background: #23a5d8; color: #fff; font: 700 19px "Liberation Sans", sans-serif; text-align: center; line-height: 24px; }
.n19 { width: 24px; height: 24px; border-radius: 50%; background: #4a1c5f; color: #fff; font: 700 13px "Liberation Sans", sans-serif; text-align: center; line-height: 24px; }
.battery { width: 46px; height: 20px; margin-left: 21px; background: #000; border: 2px solid #fff; flex: none; position: relative; }
.battery::after { content: ""; position: absolute; right: -5px; top: 4px; width: 3px; height: 8px; background: #fff; }
.level { width: 27px; height: 16px; background: #149c4c; color: #fff; font-size: 15px; line-height: 16px; padding-left: 9px; white-space: nowrap; }
.peop { margin-left: 42px; flex: none; }
.sys { flex: none; }
.s1 { margin-left: 20px; } .s2 { margin-left: 11px; } .s3 { margin-left: 10px; } .s4 { margin-left: 9px; } .s5 { margin-left: 5px; }
.clock { width: 84px; margin-left: 8px; text-align: center; font-size: 12px; line-height: 20px; flex: none; }
.notif { margin-left: 5px; position: relative; width: 26px; height: 30px; flex: none; display: block; padding-top: 7px; }
.notif b { position: absolute; left: 7px; top: 17px; width: 15px; height: 15px; border-radius: 50%; background: #3a3a3a; border: 1px solid #999; font-size: 10px; line-height: 13px; text-align: center; font-weight: 400; }
```
